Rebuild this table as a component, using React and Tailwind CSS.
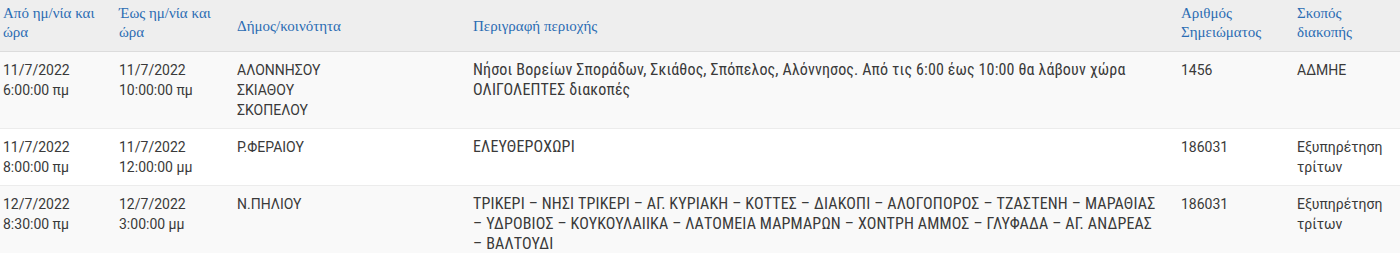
import React from 'react';

const headers = [
  'Από ημ/νία και ώρα',
  'Έως ημ/νία και ώρα',
  'Δήμος/κοινότητα',
  'Περιγραφή περιοχής',
  'Αριθμός Σημειώματος',
  'Σκοπός διακοπής',
];

const rows = [
  {
    from: ['11/7/2022', '6:00:00 πμ'],
    to: ['11/7/2022', '10:00:00 πμ'],
    area: ['ΑΛΟΝΝΗΣΟΥ', 'ΣΚΙΑΘΟΥ', 'ΣΚΟΠΕΛΟΥ'],
    desc: 'Νήσοι Βορείων Σποράδων, Σκιάθος, Σπόπελος, Αλόννησος. Από τις 6:00 έως 10:00 θα λάβουν χώρα ΟΛΙΓΟΛΕΠΤΕΣ διακοπές',
    note: '1456',
    reason: 'ΑΔΜΗΕ',
  },
  {
    from: ['11/7/2022', '8:00:00 πμ'],
    to: ['11/7/2022', '12:00:00 μμ'],
    area: ['Ρ.ΦΕΡΑΙΟΥ'],
    desc: 'ΕΛΕΥΘΕΡΟΧΩΡΙ',
    note: '186031',
    reason: 'Εξυπηρέτηση τρίτων',
  },
  {
    from: ['12/7/2022', '8:30:00 πμ'],
    to: ['12/7/2022', '3:00:00 μμ'],
    area: ['Ν.ΠΗΛΙΟΥ'],
    desc: 'ΤΡΙΚΕΡΙ – ΝΗΣΙ ΤΡΙΚΕΡΙ – ΑΓ. ΚΥΡΙΑΚΗ – ΚΟΤΤΕΣ – ΔΙΑΚΟΠΙ – ΑΛΟΓΟΠΟΡΟΣ – ΤΖΑΣΤΕΝΗ – ΜΑΡΑΘΙΑΣ – ΥΔΡΟΒΙΟΣ – ΚΟΥΚΟΥΛΑΙΙΚΑ – ΛΑΤΟΜΕΙΑ ΜΑΡΜΑΡΩΝ – ΧΟΝΤΡΗ ΑΜΜΟΣ – ΓΛΥΦΑΔΑ – ΑΓ. ΑΝΔΡΕΑΣ – ΒΑΛΤΟΥΔΙ',
    note: '186031',
    reason: 'Εξυπηρέτηση τρίτων',
  },
];

const grid = 'grid grid-cols-[116px_118px_236px_708px_116px_1fr]';

// η παύλα μένει μαζί με την επόμενη λέξη στην αλλαγή γραμμής
const Desc = ({ text }) => {
  const parts = text.split(' – ');
  return parts.map((p, i) =>
    i === 0 ? (
      <span key={i}>{p}</span>
    ) : (
      <React.Fragment key={i}>
        {' '}
        <span className="whitespace-nowrap">– {p}</span>
      </React.Fragment>
    )
  );
};

export default function App() {
  return (
    <div className="w-[1400px] h-[253px] overflow-hidden bg-white">
      {/* Κεφαλίδα πίνακα */}
      <div className={`${grid} bg-[#eeeeee] border-b border-[#dcdcdc] h-[52px] font-['Liberation_Serif',serif] text-[15px] leading-[19px] text-[#2b6cb3]`}>
        {headers.map((h, i) => (
          <div key={i} className={`pl-[3px] pr-2 pt-[4px] ${i === 3 || i === 2 ? 'flex items-center pt-0 pb-[2px]' : ''}`}>
            {h}
          </div>
        ))}
      </div>

      {/* Γραμμές */}
      {rows.map((r, i) => (
        <div
          key={i}
          className={`${grid} py-2 border-b border-[#ececec] font-['Roboto',sans-serif] text-[14px] leading-[20px] text-[#3a3a3a] ${i % 2 === 0 ? 'bg-[#f9f9f9]' : 'bg-white'}`}
        >
          <div className="pl-[3px]">{r.from.map(l => <div key={l}>{l}</div>)}</div>
          <div className="pl-[3px]">{r.to.map(l => <div key={l}>{l}</div>)}</div>
          <div className="pl-[3px]">{r.area.map(l => <div key={l}>{l}</div>)}</div>
          <div className="pl-[3px] pr-[13px] font-['Roboto_Condensed','Roboto',sans-serif] text-[16px] leading-[20px] tracking-[0.15px] text-[#3a3a3a]">
            <Desc text={r.desc} />
          </div>
          <div className="pl-[3px]">{r.note}</div>
          <div className="pl-[3px] pr-2">{r.reason}</div>
        </div>
      ))}
    </div>
  );
}
